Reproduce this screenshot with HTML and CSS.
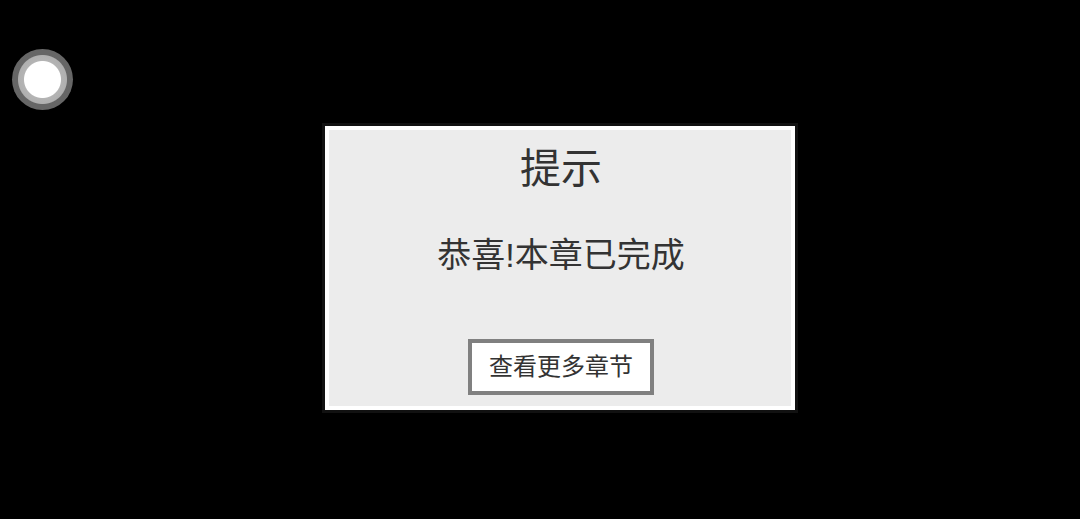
FILE: index.html
```html
<!DOCTYPE html>
<html lang="zh-CN">
<head>
    <meta charset="UTF-8">
    <meta name="viewport" content="width=device-width, initial-scale=1.0">
    <title>提示</title>
    <link rel="stylesheet" href="styles.css">
</head>
<body>
    <!-- Floating assist button -->
    <button class="assist" type="button" aria-label="菜单"></button>

    <main class="screen">
        <section class="dialog" role="dialog" aria-labelledby="dialog-title">
            <h1 class="dialog-title" id="dialog-title">提示</h1>
            <p class="dialog-text">恭喜!本章已完成</p>
            <button class="dialog-button" type="button">查看更多章节</button>
        </section>
    </main>
</body>
</html>
```
FILE: styles.css
```css
/* Basic Reset */
* {
    margin: 0;
    padding: 0;
    box-sizing: border-box;
}

body {
    font-family: "Liberation Sans", "Noto Sans CJK SC", sans-serif;
    background-color: #000;
    color: #333;
}

/* Centers the dialog in the area beside the assist button */
.screen {
    display: flex;
    justify-content: center;
    align-items: center;
    min-height: 100vh;
    padding-top: 16px;
    padding-left: 40px;
}

.dialog {
    display: flex;
    flex-direction: column;
    align-items: center;
    width: 470px;
    max-width: 100%;
    padding: 11px 16px 11px 18px;
    background-color: #ececec;
    border: 4px solid #fff;
    outline: 3px solid #111;
}

.dialog-title {
    font-size: 41px;
    font-weight: 400;
    line-height: 56px;
}

.dialog-text {
    margin-top: 34px;
    font-size: 34px;
    line-height: 48px;
}

.dialog-button {
    margin-top: 60px;
    padding: 8px 17px;
    font-family: inherit;
    font-size: 24px;
    line-height: 32px;
    color: #333;
    background-color: #fff;
    border: 4px solid #808080;
    cursor: pointer;
}

/* Floats over the page */
.assist {
    position: absolute;
    top: 49px;
    left: 12px;
    width: 61px;
    height: 61px;
    background: radial-gradient(circle, #fff 18px, #b4b4b4 19px, #b0b0b0 24px, #666 25px);
    border: none;
    border-radius: 50%;
    cursor: pointer;
}
```
